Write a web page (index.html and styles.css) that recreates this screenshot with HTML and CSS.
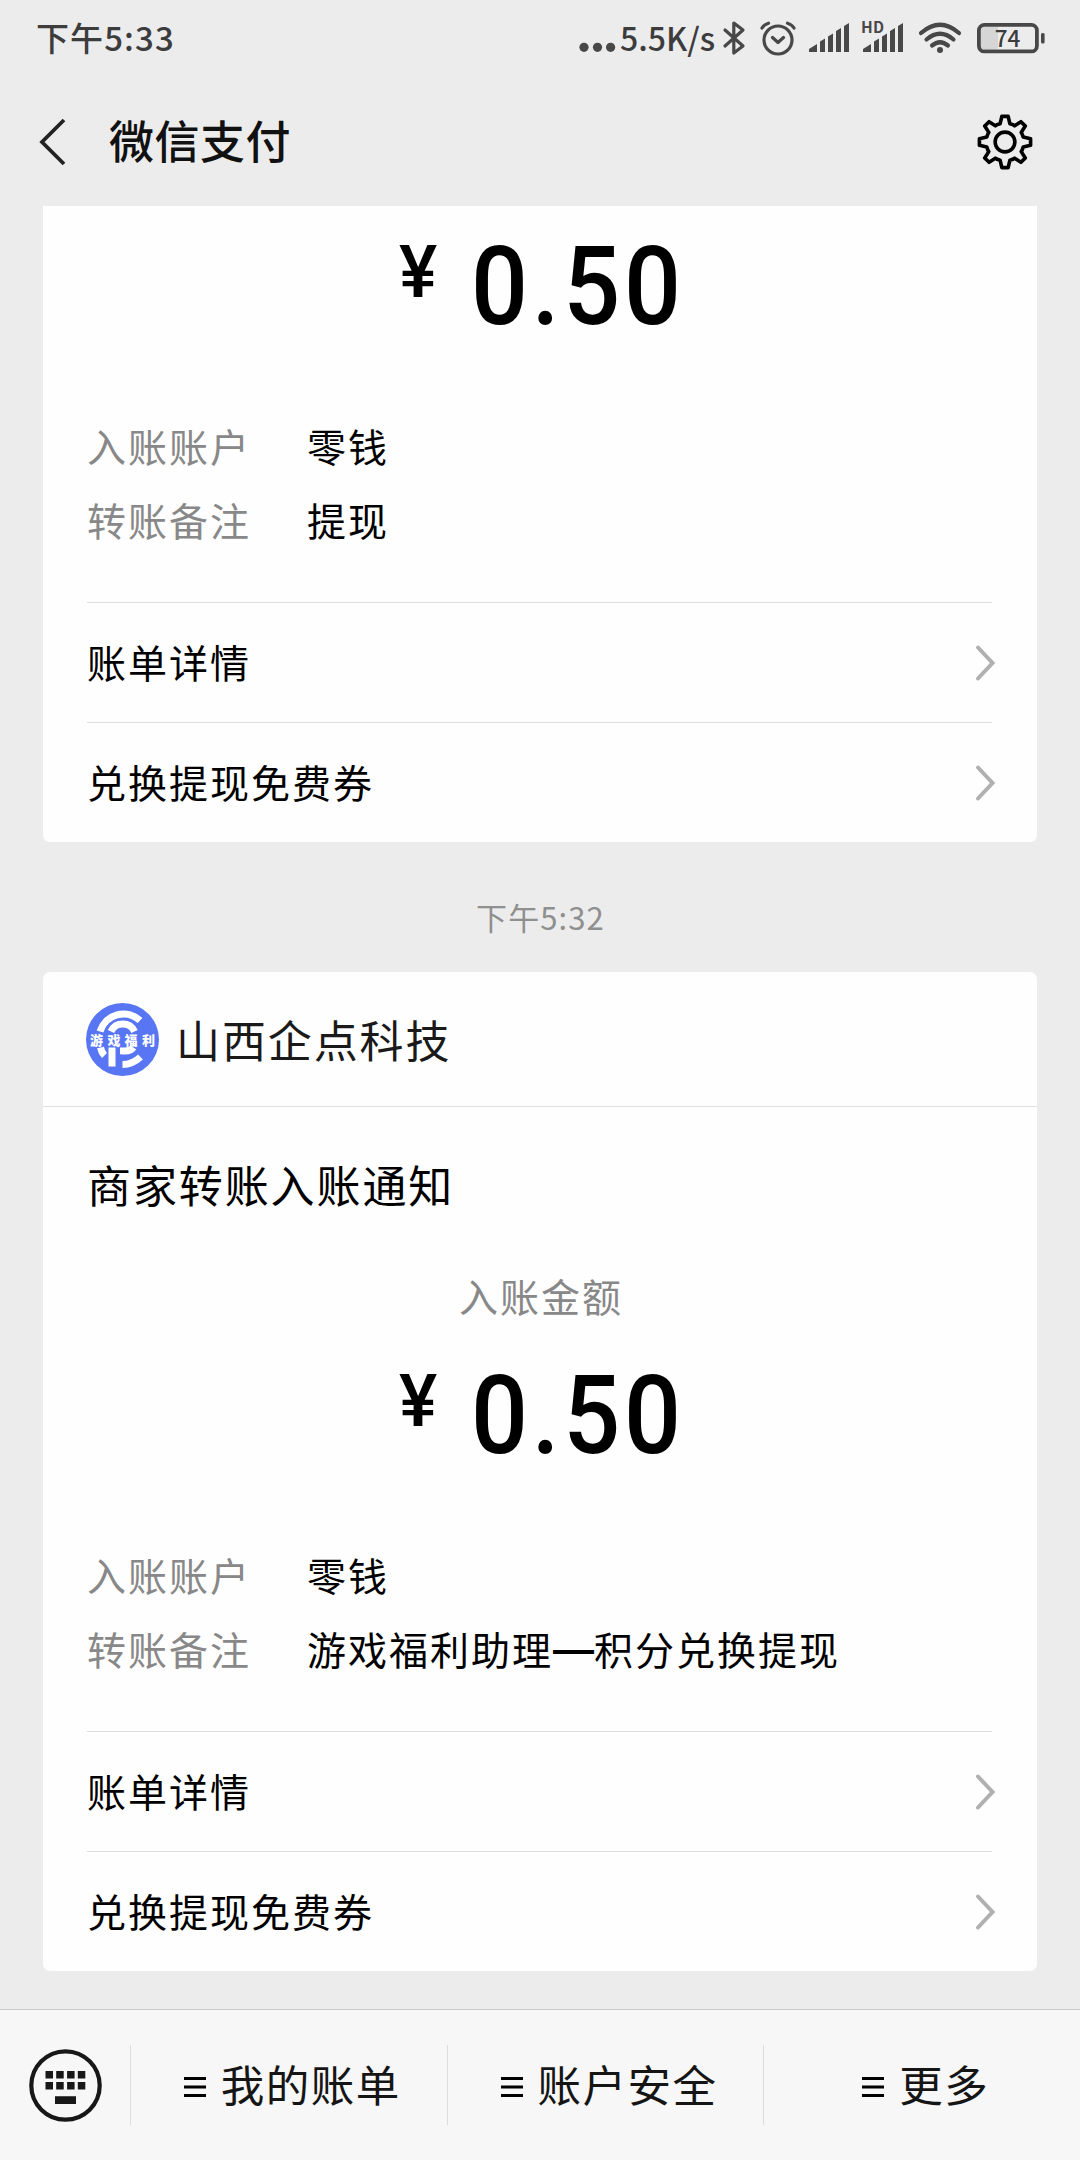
FILE: index.html
```html
<!DOCTYPE html>
<html lang="zh-CN">
<head>
<meta charset="utf-8">
<title>微信支付</title>
<link rel="stylesheet" href="styles.css">
</head>
<body>
<div class="screen">
  <div class="status">
    <span class="clock">下午5:33</span>
    <div class="indicators">
      <svg class="dots" width="40" height="74" viewBox="0 0 40 74"><circle cx="6" cy="47.3" r="4.6"/><circle cx="19.5" cy="47.3" r="4.6"/><circle cx="32.6" cy="47.3" r="4.6"/></svg>
      <span class="speed">5.5K/s</span>
      <svg class="line-icon" width="28" height="74" viewBox="0 0 28 74"><path d="M5 30 23 46 13.800 53V23L23 30 5 46"/></svg>
      <svg class="line-icon alarm" width="40" height="74" viewBox="0 0 40 74"><circle cx="20" cy="40" r="14"/><path d="M14.500 37.500 20 42.500 25.500 37.500M4 28Q6 24.500 10.500 23.200M36 28Q34 24.500 29.500 23.200"/></svg>
      <svg class="signal" width="42" height="74" viewBox="0 0 42 74"><path d="M1 52V49L9 44V52ZM12 52V41.500L17 38.500V52ZM20 52V36.500L25 33.500V52ZM28 52V31L33 28V52ZM36 52V26L41 23V52Z"/></svg>
      <svg class="signal hd" width="44" height="74" viewBox="0 0 44 74"><path d="M3 52V49L11 44V52ZM14 52V41.500L19 38.500V52ZM22 52V36.500L27 33.500V52ZM30 52V31L35 28V52ZM38 52V26L43 23V52Z"/><text x="1" y="33" textLength="23">HD</text></svg>
      <svg class="line-icon wifi" width="44" height="74" viewBox="0 0 44 74"><path d="M3 33Q22 16.500 41 33M8.500 39.500Q22 28 35.500 39.500M14 45.500Q22 39 30 45.500"/><circle cx="22" cy="50" r="3"/></svg>
      <svg class="battery" width="70" height="74" viewBox="0 0 70 74"><rect class="charge" x="5" y="27" width="17" height="22"/><rect class="shell" x="2.900" y="24.900" width="58" height="26.500" rx="5.500"/><rect class="cap" x="65" y="33" width="3.600" height="10.500" rx="1.500"/><text x="31.500" y="46.500">74</text></svg>
    </div>
  </div>

  <header class="nav">
    <svg class="back" width="30" height="50" viewBox="0 0 30 50"><path d="M26 3 4 25 26 47"/></svg>
    <h1>微信支付</h1>
    <svg class="gear" width="60" height="60" viewBox="-30.500 -30.500 61 61">
      <path d="M-3.200-26H3.200L5-18.500Q8.500-17.500 9.800-16.500L16.200-20.600 20.600-16.200 16.500-9.800Q17.500-8.500 18.500-5L26-3.200V3.200L18.500 5Q17.500 8.500 16.500 9.800L20.600 16.200 16.200 20.600 9.800 16.500Q8.500 17.500 5 18.500L3.200 26H-3.200L-5 18.500Q-8.500 17.500-9.800 16.500L-16.200 20.600-20.600 16.200-16.500 9.800Q-17.500 8.500-18.500 5L-26 3.200V-3.200L-18.500-5Q-17.500-8.500-16.500-9.800L-20.600-16.200-16.200-20.600-9.800-16.500Q-8.500-17.500-5-18.500Z"/>
      <circle r="10"/>
    </svg>
  </header>

  <main class="messages">
    <section class="card">
      <div class="amount"><span class="yen">¥</span><span class="value">0.50</span></div>
      <dl class="details">
        <div><dt>入账账户</dt><dd>零钱</dd></div>
        <div><dt>转账备注</dt><dd>提现</dd></div>
      </dl>
      <div class="link"><span>账单详情</span><svg width="22" height="40" viewBox="0 0 22 40"><path d="M3 4.500 17.500 20 3 35.500"/></svg></div>
      <div class="link"><span>兑换提现免费券</span><svg width="22" height="40" viewBox="0 0 22 40"><path d="M3 4.500 17.500 20 3 35.500"/></svg></div>
    </section>

    <div class="time">下午5:32</div>

    <section class="card">
      <div class="merchant">
        <svg width="74" height="74" viewBox="-37.500 -37.500 74 74">
          <circle class="disc" r="36.500"/>
          <path class="ring" d="M-22.500-8A24.500 24.500 0 0 1 17.500-19"/>
          <path class="ring" d="M-11.500-8A13 13 0 0 1 12-8"/>
          <path class="ring" d="M-22 8Q-21 13-18 16M-10.500 8V27M1 8V11.500Q8 12 11 8M0 25Q10 25 18 17.500"/>
          <g class="badge"><text x="-32.500" y="5.500">游</text><text x="-15" y="5.500">戏</text><text x="2" y="5.500">福</text><text x="19.500" y="5.500">利</text></g>
        </svg>
        <span>山西企点科技</span>
      </div>
      <h2>商家转账入账通知</h2>
      <div class="caption">入账金额</div>
      <div class="amount"><span class="yen">¥</span><span class="value">0.50</span></div>
      <dl class="details">
        <div><dt>入账账户</dt><dd>零钱</dd></div>
        <div><dt>转账备注</dt><dd>游戏福利助理<span class="dash">—</span>积分兑换提现</dd></div>
      </dl>
      <div class="link"><span>账单详情</span><svg width="22" height="40" viewBox="0 0 22 40"><path d="M3 4.500 17.500 20 3 35.500"/></svg></div>
      <div class="link"><span>兑换提现免费券</span><svg width="22" height="40" viewBox="0 0 22 40"><path d="M3 4.500 17.500 20 3 35.500"/></svg></div>
    </section>
  </main>

  <footer class="menu">
    <div class="keyboard">
      <svg width="74" height="74" viewBox="0 0 74 74"><circle cx="37.500" cy="37.500" r="34.200"/><path d="M17.500 23h7.500V30.500H17.500zM28.200 23h7.500V30.500h-7.500zM39.100 23h7.500V30.500h-7.500zM49.800 23h7.500V30.500h-7.500zM17.500 34h7.500V41.500H17.500zM28.200 34h7.500V41.500h-7.500zM39.100 34h7.500V41.500h-7.500zM49.800 34h7.500V41.500h-7.500zM27 48.200h21v7.800h-21z"/></svg>
    </div>
    <div class="tab"><svg width="22" height="22" viewBox="0 0 22 22"><path d="M0 2.500H22M0 11H22M0 19.500H22"/></svg><span>我的账单</span></div>
    <div class="tab"><svg width="22" height="22" viewBox="0 0 22 22"><path d="M0 2.500H22M0 11H22M0 19.500H22"/></svg><span>账户安全</span></div>
    <div class="tab"><svg width="22" height="22" viewBox="0 0 22 22"><path d="M0 2.500H22M0 11H22M0 19.500H22"/></svg><span>更多</span></div>
  </footer>
</div>
</body>
</html>
```

FILE: styles.css
```css
* { box-sizing: border-box; margin: 0; padding: 0; }

body {
  background: #ececec;
  color: #000;
  font-family: "Noto Sans CJK SC", sans-serif;
}

svg { display: block; flex: none; fill: none; }

.screen {
  width: 1080px;
  height: 2160px;
  display: flex;
  flex-direction: column;
  overflow: hidden;
}

/* Status bar */
.status {
  height: 74px;
  display: flex;
  justify-content: space-between;
  padding: 0 34px 0 36px;
  color: #3c3c3c;
  line-height: 74px;
  white-space: nowrap;
}
.clock { font-size: 33px; font-weight: 500; letter-spacing: 1.100px; }
.indicators { display: flex; }
.dots, .signal { fill: #484848; }
.speed { width: 102px; padding-left: 2px; font-size: 32px; font-weight: 500; }
.line-icon { stroke: #484848; stroke-width: 3.2; stroke-linecap: round; stroke-linejoin: round; }
.alarm { margin-left: 10px; }
.signal { margin-left: 10px; }
.signal text { font-size: 15.500px; font-weight: 700; }
.wifi { margin-left: 14px; stroke-width: 4.200; }
.wifi circle { fill: #484848; stroke: none; }
.battery { margin-left: 14px; }
.shell { stroke: #484848; stroke-width: 3.800; }
.charge { fill: #d6d6d6; }
.cap { fill: #484848; }
.battery text { fill: #3c3c3c; font-size: 22.500px; font-weight: 500; text-anchor: middle; }

/* Title bar */
.nav {
  height: 132px;
  display: flex;
  align-items: center;
  padding: 0 45px 0 38px;
}
.nav h1 {
  flex: 1;
  margin-left: 41px;
  color: #111;
  font-size: 45px;
  font-weight: 500;
  letter-spacing: .5px;
  line-height: 130px;
}
.back, .gear { margin-top: 3px; }
.back { stroke: #222; stroke-width: 3.800; }
.gear { stroke: #000; stroke-width: 3.700; stroke-linejoin: round; }

/* Message cards */
.messages { flex: 1; padding: 0 43px; }
.card {
  overflow: hidden;
  background: #fefefe;
  border-radius: 7px;
}
.card:first-child { padding-top: 31px; border-radius: 0 0 7px 7px; }
.amount {
  height: 100px;
  display: flex;
  align-items: flex-start;
  padding-left: 356px;
  font-family: Roboto, sans-serif;
  font-weight: 500;
}
.yen { width: 72px; font-size: 72px; line-height: 71px; }
.value {
  font-size: 109px;
  letter-spacing: 4px;
  line-height: 100px;
  transform: scaleX(.92);
  transform-origin: 0 50%;
}
.details { margin: 71px 0 46px; font-size: 39px; letter-spacing: 2px; }
.details div { display: flex; height: 74px; padding-left: 44px; line-height: 74px; }
.details dt { width: 220px; color: #888; }
.dash {
  font-family: "Liberation Sans", sans-serif;
  font-size: 41px;
  font-weight: 700;
  letter-spacing: 0;
  line-height: 0;
  vertical-align: 2px;
}
.link {
  height: 120px;
  display: flex;
  align-items: center;
  justify-content: space-between;
  margin: 0 45px 0 44px;
  border-top: 1px solid #dedede;
  font-size: 39px;
  letter-spacing: 2px;
}
.link span { padding-bottom: 3px; }
.link svg { margin-right: -5px; stroke: #b0b0b0; stroke-width: 4; stroke-linecap: round; }
.time {
  height: 130px;
  padding: 20px 0 0 1px;
  color: #8f8f8f;
  font-size: 31px;
  letter-spacing: 1.100px;
  line-height: 110px;
  text-align: center;
}
.merchant {
  height: 135px;
  display: flex;
  align-items: center;
  padding-left: 42px;
  border-bottom: 1px solid #e0e0e0;
  color: #1a1a1a;
  font-size: 44px;
  letter-spacing: 1.900px;
}
.merchant > span { margin-left: 17px; padding-bottom: 1px; }
.disc { fill: #5876f3; }
.ring { stroke: #fff; stroke-width: 7; }
.badge { fill: #fff; font-size: 13px; font-weight: 900; letter-spacing: 0; }
.card h2 {
  margin: 47px 0 51px 44px;
  font-size: 44px;
  font-weight: 400;
  letter-spacing: 1.900px;
  line-height: 60px;
}
.caption {
  margin-bottom: 41px;
  padding-left: 2px;
  color: #888;
  font-size: 39px;
  letter-spacing: 2px;
  line-height: 60px;
  text-align: center;
}

/* Bottom menu */
.menu {
  height: 151px;
  display: flex;
  align-items: center;
  background: #f7f7f7;
  border-top: 1px solid #cacaca;
}
.keyboard { width: 130px; padding-left: 28px; }
.keyboard svg { fill: #181818; }
.keyboard circle { fill: none; stroke: #181818; stroke-width: 4.200; }
.tab {
  flex: 1;
  height: 80px;
  display: flex;
  align-items: center;
  justify-content: center;
  gap: 15px;
  padding-left: 7px;
  border-left: 1px solid #dcdcdc;
  color: #151515;
  font-size: 43.500px;
  letter-spacing: 1.500px;
  line-height: 76px;
}
.tab svg { margin-top: 3px; stroke: #000; stroke-width: 2.800; }
.tab span { margin-bottom: 3px; }
```
